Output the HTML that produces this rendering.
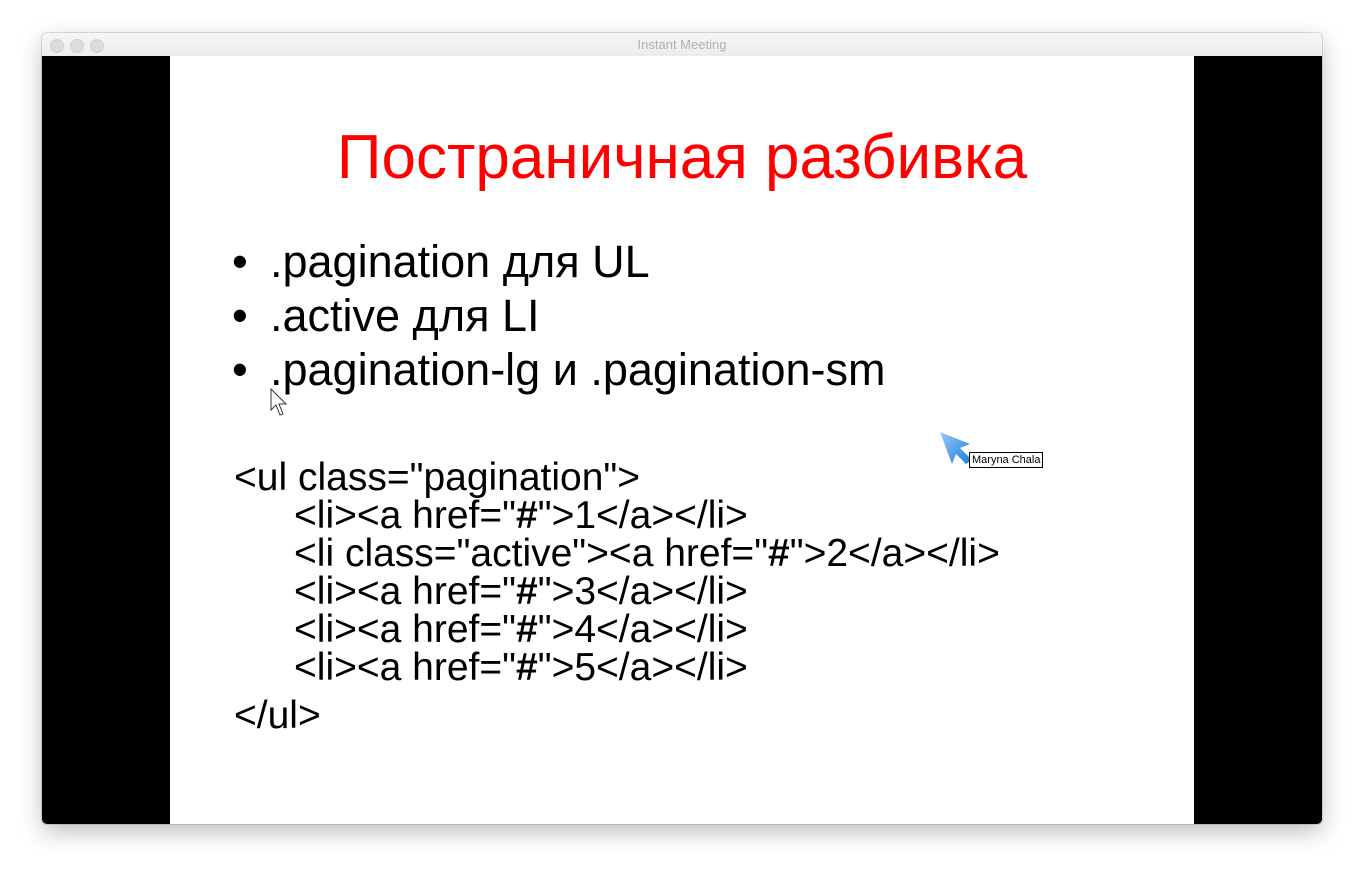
<!DOCTYPE html>
<html><head><meta charset="utf-8"><style>
html,body{margin:0;padding:0;background:#fff;width:1364px;height:874px;overflow:hidden;position:relative;font-family:"Liberation Sans",Arial,sans-serif}
.win{position:absolute;left:42px;top:33px;width:1280px;height:791px;border-radius:5px;overflow:hidden;box-shadow:0 8px 24px rgba(0,0,0,0.25),0 0 0 1px rgba(0,0,0,0.12)}
.tb{position:absolute;left:0;top:0;width:1280px;height:23px;background:linear-gradient(#f6f6f6,#ececec);border-bottom:1px solid #d0d0d0;text-align:center;font-size:13px;line-height:23px;color:#b0b0b0}
.dot{position:absolute;top:6px;width:12px;height:12px;border-radius:50%;background:#dcdcdc;border:0.5px solid #d0d0d0}
.blk{position:absolute;left:0;top:23px;width:1280px;height:768px;background:#000}
.slide{position:absolute;left:128px;top:0;width:1024px;height:768px;background:#fff}
.t{position:absolute;white-space:pre;line-height:1;color:#000}
.c{position:absolute;white-space:pre;color:#000;font-size:39px;line-height:38px}
</style></head><body>
<div class="win">
<div class="tb">Instant Meeting<div class="dot" style="left:8px"></div><div class="dot" style="left:28px"></div><div class="dot" style="left:48px"></div></div>
<div class="blk"><div class="slide"></div></div>
</div>
<div class="t" style="left:0;width:1364px;text-align:center;top:127px;font-size:62px;color:#ff0000">Постраничная разбивка</div>
<div class="t" style="left:232px;top:235px;font-size:45px;line-height:54px">•</div>
<div class="t" style="left:232px;top:289px;font-size:45px;line-height:54px">•</div>
<div class="t" style="left:232px;top:343px;font-size:45px;line-height:54px">•</div>
<div class="t" style="left:270px;top:235px;font-size:45px;line-height:54px">.pagination для UL
.active для LI
.pagination-lg и .pagination-sm</div>
<div class="c" style="left:234px;top:459px">&lt;ul class="pagination"&gt;</div>
<div class="c" style="left:294px;top:497px">&lt;li&gt;&lt;a href="<b>#</b>"&gt;1&lt;/a&gt;&lt;/li&gt;
&lt;li class="active"&gt;&lt;a href="<b>#</b>"&gt;2&lt;/a&gt;&lt;/li&gt;
&lt;li&gt;&lt;a href="<b>#</b>"&gt;3&lt;/a&gt;&lt;/li&gt;
&lt;li&gt;&lt;a href="<b>#</b>"&gt;4&lt;/a&gt;&lt;/li&gt;
&lt;li&gt;&lt;a href="<b>#</b>"&gt;5&lt;/a&gt;&lt;/li&gt;</div>
<div class="t" style="left:234px;top:696px;font-size:39px">&lt;/ul&gt;</div>
<svg style="position:absolute;left:270px;top:388px" width="20" height="30"><path d="M1,1 L1,22 L6,17 L10,27 L13,26 L9,16 L16,16 Z" fill="#fff" stroke="#333" stroke-width="1"/></svg>
<svg style="position:absolute;left:938px;top:430px" width="36" height="36"><defs><linearGradient id="g" x1="0" y1="0" x2="1" y2="1"><stop offset="0" stop-color="#9cc8f4"/><stop offset="1" stop-color="#1a7fe0"/></linearGradient></defs><path d="M2,2 L32,14 L22,18 L34,30 L28,34 L18,24 L14,34 Z" fill="url(#g)"/></svg>
<div style="position:absolute;left:969px;top:452px;border:1px solid #000;background:#fff;font-size:11px;line-height:14px;padding:0 2px;font-family:'Liberation Sans',sans-serif">Maryna Chala</div>
</body></html>
